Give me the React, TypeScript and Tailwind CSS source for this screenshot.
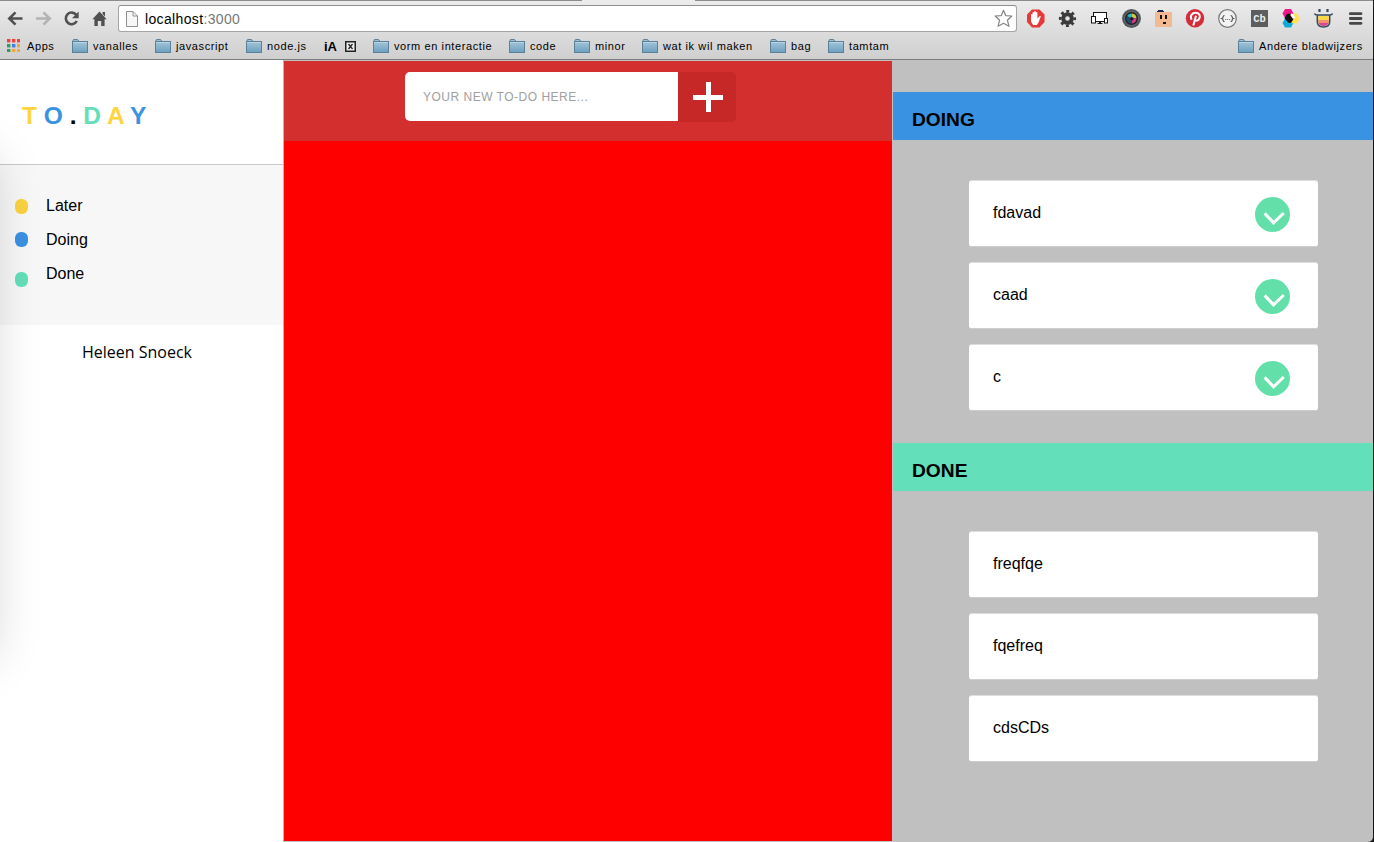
import React from "react";

function Folder() {
  return (
    <svg width="16" height="14" viewBox="0 0 16 14" className="-mt-[2px] shrink-0">
      <defs>
        <linearGradient id="folder" x1="0" y1="0" x2="0" y2="1">
          <stop offset="0" stopColor="#a3c6da" />
          <stop offset="1" stopColor="#6d9fbe" />
        </linearGradient>
      </defs>
      <path d="M1 4V1.5Q1 .5 2 .5H5.5Q6.3 .5 6.5 2.5H15" fill="#9fc0d3" stroke="#5d8199" />
      <rect x=".5" y="2.5" width="15" height="11" fill="url(#folder)" stroke="#5a809a" />
      <path d="M1 3.5H15" stroke="#b9d5e3" />
    </svg>
  );
}

function Bookmark({ label, width }: { label: string; width: string }) {
  return (
    <div className={`flex shrink-0 items-center gap-[5px] ${width}`}>
      <Folder />
      <span>{label}</span>
    </div>
  );
}

const appColors = ["#e8433f", "#e8433f", "#e8433f", "#2f9e5b", "#3b82e0", "#f0a63a", "#2f9e5b", "#f0a63a", "#f0a63a"];

function AppsIcon() {
  return (
    <svg width="13" height="13" viewBox="0 0 13 13" className="-mt-[2px] shrink-0">
      {appColors.map((c, i) => (
        <rect key={i} x={(i % 3) * 5} y={Math.floor(i / 3) * 5} width="3.4" height="3.4" fill={c} />
      ))}
    </svg>
  );
}

function NavIcons() {
  return (
    <svg width="118" height="34" viewBox="0 -1 118 34" className="shrink-0">
      <g fill="none" strokeWidth="2.6">
        <path d="M22.5 17.5H9.5M15.5 11.3L9.3 17.5L15.5 23.7" stroke="#505050" />
        <path d="M36 17.5H49M43.5 11.3L49.7 17.5L43.5 23.7" stroke="#b3b3b3" />
        <path d="M76.2 13.8A5.8 5.8 0 1 0 76.8 20" stroke="#505050" />
      </g>
      <path d="M78.7 10.5V17.2H72Z" fill="#505050" />
      <path d="M99.5 10.6L106.6 18.3H104.6V25H101.2V20H97.8V25H94.4V18.3H92.4ZM102.6 11H105V15.5L102.6 13Z" fill="#505050" />
    </svg>
  );
}

function Extensions() {
  return (
    <svg width="356" height="36" viewBox="1017 0 356 36" className="shrink-0">
      <path d="M1032 9.5H1039.5L1044.5 14.5V22L1039.5 27.5H1032L1027 22V14.5Z" fill="#e83838" />
      <path d="M1031 19V14.5q.8-1 1.5 0V12.5q.9-1 1.6 0V11.5q1-1 1.7 0V12.5q.9-.8 1.6 0V18.5l2.3-2.5q1.4-.3 1 .8L1038.5 22.5L1036.8 25H1033L1031 21.5Z" fill="#fff" />

      <circle cx="1067.5" cy="18.5" r="4.3" fill="none" stroke="#3b3b3b" strokeWidth="4" />
      <circle cx="1067.5" cy="18.5" r="7.2" fill="none" stroke="#3b3b3b" strokeWidth="2.8" strokeDasharray="2.9 2.755" strokeDashoffset="1.45" />

      <g fill="#fff" stroke="#171717">
        <rect x="1093.5" y="12.5" width="13" height="9" />
        <rect x="1091.5" y="16.5" width="4" height="6.5" />
        <rect x="1104.5" y="18.5" width="3" height="4.5" />
      </g>
      <path d="M1097.5 23.5H1102.5" stroke="#171717" />
      <path d="M1099 22.5H1101" stroke="#171717" />

      <circle cx="1131.5" cy="18.5" r="9.4" fill="#50565c" />
      <circle cx="1131.5" cy="18.5" r="7" fill="#202326" stroke="#777c80" strokeWidth=".8" />
      <path d="M1131.5 18.5L1127 16A5 5 0 0 1 1132 13.5Z" fill="#37b6c8" />
      <path d="M1131.5 18.5L1132 13.5A5 5 0 0 1 1136.5 18Z" fill="#c6cf3b" />
      <path d="M1131.5 18.5L1136.5 18A5 5 0 0 1 1132 23.5Z" fill="#d63b86" />
      <path d="M1131.5 18.5L1132 23.5A5 5 0 0 1 1127 16Z" fill="#1d4f70" />
      <circle cx="1131.8" cy="18.7" r="1.8" fill="#22162c" />

      <rect x="1155" y="12" width="17" height="15" fill="#f2b992" />
      <path d="M1157 12V11H1158V10H1163V11H1164V12Z" fill="#16244f" />
      <path d="M1160 15H1162V19H1160ZM1165 15H1167V19H1165ZM1163 22H1166V24H1163Z" fill="#151515" />

      <circle cx="1195" cy="18.3" r="9.2" fill="#d52c3a" />
      <path d="M1191.6 19.8C1189.5 15.8 1192.2 12.8 1195.6 12.8C1199.3 12.8 1200.5 15.5 1199.5 18.1C1198.4 21.2 1195.6 21.2 1194.5 19.5M1196 15.8L1193.3 25.5" fill="none" stroke="#fff" strokeWidth="2" />

      <circle cx="1227.5" cy="18.5" r="8.8" fill="#f3f3f3" stroke="#777" strokeWidth="1.2" />
      <path d="M1224.6 15.5q-1.5 0-1.5 1.3t-1.3 1.7q1.3.4 1.3 1.7T1224.6 21.5M1230.6 15.5q1.5 0 1.5 1.3t1.3 1.7q-1.3.4-1.3 1.7T1230.6 21.5" fill="none" stroke="#555" strokeWidth="1.2" />
      <path d="M1225.2 19.5H1230.5" stroke="#666" strokeDasharray="1 1" />

      <rect x="1251" y="10" width="17" height="17" fill="#5c5d5f" />
      <text x="1259.5" y="22" textAnchor="middle" fontFamily="Liberation Mono, monospace" fontWeight="700" fontSize="10.5" fill="#eee">Cb</text>

      <path d="M1285 9H1291L1293.5 13.5L1291 18H1285L1282.5 13.5Z" fill="#ed168c" />
      <path d="M1285 18.5H1291L1293.5 23L1291 27.5H1285L1282.5 23Z" fill="#10aada" />
      <path d="M1291 13.7H1297L1299.8 18.5L1297 23.3H1291L1288.5 18.5Z" fill="#ffe24e" />
      <path d="M1287 13.7L1291 13.7L1293.8 18.5L1291 23L1288 22.5L1284.5 18Z" fill="#111" />
      <path d="M1291 13.7L1293.5 13.9L1295.5 18.3L1292.8 18.8L1290.3 15Z" fill="#fff" />

      <path d="M1318.3 16H1328.7V22Q1328.5 26 1323.5 26T1318.3 22Z" fill="#fbd748" />
      <path d="M1318.3 20H1328.7V23H1318.5Z" fill="#f58e71" />
      <path d="M1318.6 23H1328.4Q1327.5 26 1323.5 26T1318.6 23Z" fill="#d84793" />
      <path d="M1314.5 13.5Q1315 15 1317.3 15V21.5Q1317.3 27 1323.5 27T1329.7 21.5V15Q1332 15 1332.5 13.5M1316.5 15H1330.5" fill="none" stroke="#34495e" strokeWidth="1.5" />
      <path d="M1319.5 9V12M1327.5 9V12" stroke="#34495e" strokeWidth="2.2" />

      <path d="M1350.3 13.7H1361M1350.3 18.5H1361M1350.3 23.3H1361" stroke="#484848" strokeWidth="2.8" strokeLinecap="round" />
    </svg>
  );
}

function Chrome() {
  return (
    <header className="flex h-[60px] shrink-0 flex-col border-b border-[#7c7c7c] bg-linear-to-b from-[#ececec] to-[#cfcfcf]">
      <div className="flex h-px shrink-0 justify-between">
        <div className="w-[582px] bg-[#8e8a8e]" />
        <div className="w-[678px] bg-[#8e8a8e]" />
      </div>
      <div className="flex h-[33px] shrink-0">
        <div className="-mt-px h-[34px] w-[118px] shrink-0">
          <NavIcons />
        </div>
        <div className="mt-1 flex h-[27px] w-[899px] shrink-0 items-center rounded-[3px] border border-[#a5a5a5] border-t-[#8f8f8f] bg-white pr-[3px] pl-[7px]">
          <svg width="12" height="16" viewBox="0 0 12 16">
            <path d="M.5 .5H7L11.5 5V15.5H.5ZM7 .5V5H11.5" fill="#f7f7f7" stroke="#8f8f8f" />
          </svg>
          <div className="ml-[7px] grow text-sm tracking-[0.35px] text-black">
            localhost<span className="text-[#777]">:3000</span>
          </div>
          <svg width="19" height="19" viewBox="0 0 19 19">
            <path d="M9.5 1.2L11.7 6.6L17.8 7L13.4 11.2L15 17.3L9.5 14.3L4 17.3L5.6 11.2L1.2 7L7.3 6.6Z" fill="#fff" stroke="#858585" strokeWidth="1.2" strokeLinejoin="round" />
          </svg>
        </div>
        <div className="-mt-px h-[36px] shrink-0">
          <Extensions />
        </div>
      </div>
      <div className="flex h-[25px] shrink-0 items-center pl-[7px] text-[11px] tracking-[0.6px] text-black">
        <div className="flex w-[65px] shrink-0 items-center gap-[7px]">
          <AppsIcon />
          <span>Apps</span>
        </div>
        <Bookmark label="vanalles" width="w-[83px]" />
        <Bookmark label="javascript" width="w-[91px]" />
        <Bookmark label="node.js" width="w-[78px]" />
        <div className="flex w-[49px] shrink-0 items-center gap-[8px]">
          <span className="text-[13px] font-bold tracking-normal">iA</span>
          <svg width="11" height="11" viewBox="0 0 11 11">
            <rect x=".75" y=".75" width="9.5" height="9.5" fill="#eee" stroke="#222" strokeWidth="1.5" />
            <path d="M3.5 3L7.5 8M7.5 3L3.5 8" stroke="#222" strokeWidth="1.3" />
          </svg>
        </div>
        <Bookmark label="vorm en interactie" width="w-[136px]" />
        <Bookmark label="code" width="w-[65px]" />
        <Bookmark label="minor" width="w-[68px]" />
        <Bookmark label="wat ik wil maken" width="w-[128px]" />
        <Bookmark label="bag" width="w-[58px]" />
        <Bookmark label="tamtam" width="w-[410px]" />
        <Bookmark label="Andere bladwijzers" width="w-[130px]" />
      </div>
    </header>
  );
}

function Sidebar() {
  return (
    <aside className="relative w-[284px] shrink-0 overflow-hidden border-r border-[#b8b8b8] bg-white">
      <div className="flex h-[105px] items-center border-b border-[#c8c8c8] pt-[9px] pl-[22px]">
        <h1 className="text-[24.5px] leading-none font-bold whitespace-pre">
          <span className="text-[#ffd440]">T </span>
          <span className="text-[#3a92e2]">O </span>
          <span className="text-black">. </span>
          <span className="text-[#63e0b9]">D </span>
          <span className="text-[#ffd440]">A </span>
          <span className="text-[#3a92e2]">Y</span>
        </h1>
      </div>
      <nav className="flex h-40 bg-[#f7f7f7] pt-[24px] pl-[15px]">
        <div className="flex w-[31px] flex-col pt-[10px]">
          <i className="h-[15px] w-[13px] rounded-[6px] bg-[#fbd241]" />
          <i className="mt-[18px] h-[15px] w-[13px] rounded-[6px] bg-[#3a92e2]" />
          <i className="mt-[25px] h-[15px] w-[13px] rounded-[6px] bg-[#63e0b9]" />
        </div>
        <div className="flex flex-col text-base leading-[34px]">
          <span>Later</span>
          <span>Doing</span>
          <span>Done</span>
        </div>
      </nav>
      <div className="pt-[15px] pl-[82px] font-['Open_Sans',sans-serif] text-base leading-6">Heleen Snoeck</div>
      <div className="absolute top-[97px] -left-[108px] h-[500px] w-[100px] shadow-[0_0_50px_rgba(0,0,0,0.18)]" />
    </aside>
  );
}

function Card({ text, action }: { text: string; action?: boolean }) {
  return (
    <li className="flex h-[67px] w-[349px] justify-between rounded-[3px] border-t border-b border-t-[#dedede] border-b-[#cdcdcd] bg-white pt-4 pr-7 pl-6">
      <span className="text-base leading-8">{text}</span>
      {action && (
        <svg width="35" height="35" viewBox="0 0 35 35">
          <circle cx="17.5" cy="17.5" r="17.5" fill="#63e0a9" />
          <path d="M9.7 16.4L18.5 25.8L28.8 16" fill="none" stroke="#fff" strokeWidth="3" />
        </svg>
      )}
    </li>
  );
}

function Section({ title, color, items, action }: { title: string; color: string; items: string[]; action?: boolean }) {
  return (
    <section>
      <h3 className={`h-12 pl-[19px] text-[19.2px] leading-[55px] font-bold ${color}`}>{title}</h3>
      <ul className="mt-10 flex flex-col gap-[15px] pl-[76px]">
        {items.map((t) => (
          <Card key={t} text={t} action={action} />
        ))}
      </ul>
    </section>
  );
}

export default function App() {
  return (
    <div className="flex h-[842px] w-[1374px] overflow-hidden bg-[#161816] font-['Liberation_Sans',Arial,sans-serif] text-black">
      <div className="flex w-[1373px] shrink-0 flex-col overflow-hidden rounded-br-[5px] bg-[#c0c0c0]">
        <Chrome />
        <main className="flex grow">
          <Sidebar />
          <div className="my-px w-[608px] shrink-0 bg-[#ff0000]">
            <form className="flex h-20 bg-[#d32f2f] pt-[11px] pl-[121px]">
              <input
                className="h-[49px] w-[273px] rounded-l-[5px] bg-white pl-[18px] text-[12px] tracking-[0.5px] outline-none placeholder:text-[#a0a0a0]"
                placeholder="YOUR NEW TO-DO HERE..."
              />
              <button type="button" aria-label="Add" className="flex h-[50px] w-[58px] rounded-r-[5px] bg-[#c62828] pt-[10px] pl-[15px]">
                <svg width="30" height="30" viewBox="0 0 30 30">
                  <path d="M0 15.5H30M15.5 0V30" stroke="#fff" strokeWidth="5" />
                </svg>
              </button>
            </form>
          </div>
          <div className="flex grow flex-col gap-8 pt-8 pl-px">
            <Section title="DOING" color="bg-[#3a92e2]" items={["fdavad", "caad", "c"]} action />
            <Section title="DONE" color="bg-[#63e0b9]" items={["freqfqe", "fqefreq", "cdsCDs"]} />
          </div>
        </main>
      </div>
    </div>
  );
}
